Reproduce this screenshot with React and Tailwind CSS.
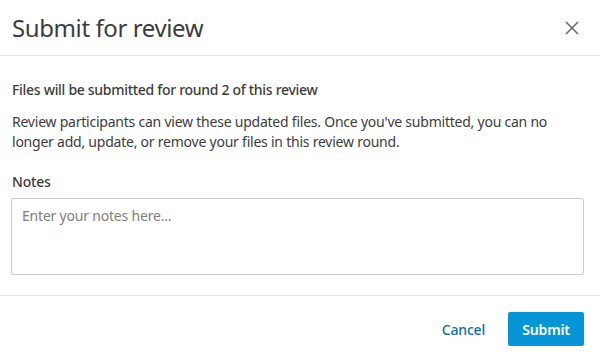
export default function App() {
  return (
    <div className="w-[600px] h-[356px] bg-white text-[#3c3c3c] font-['Noto_Sans',sans-serif] flex flex-col">
      {/* Header */}
      <div className="h-[56px] flex items-center justify-between pl-3 pr-[21px] border-b border-[#e6e6e6]">
        <h1 className="text-[24px] leading-none tracking-[-0.4px] text-[#3c3c3c]">Submit for review</h1>
        <button className="w-[14px] h-[14px] flex items-center justify-center text-[#666]">
          <svg width="14" height="14" viewBox="0 0 14 14" fill="none" stroke="currentColor" strokeWidth="1.5">
            <path d="M1 1L13 13M13 1L1 13" />
          </svg>
        </button>
      </div>

      {/* Body */}
      <div className="pl-[11px] pr-4 pt-6 pb-5 border-b border-[#e6e6e6]">
        <p className="text-[14px] leading-5 font-medium tracking-[-0.3px] pl-px">Files will be submitted for round 2 of this review</p>
        <p className="mt-3 text-[14px] leading-5 tracking-[-0.23px] pl-px text-[#3c3c3c]">
          Review participants can view these updated files. Once you've submitted, you can no longer add, update, or remove your files in this review round.
        </p>
        <p className="mt-5 text-[14px] leading-5 font-medium tracking-[-0.2px] pl-px">Notes</p>
        <textarea
          className="mt-[6px] block w-full h-[77px] resize-none border border-[#cccccc] rounded-[2px] px-[10px] py-[7px] text-[14px] leading-5 tracking-[-0.2px] placeholder:text-[#808080] outline-none"
          placeholder="Enter your notes here..."
        />
      </div>

      {/* Footer */}
      <div className="flex items-center justify-end gap-[23px] pt-4 pr-4">
        <button className="text-[14px] font-medium tracking-[-0.2px] text-[#0a6fa8]">Cancel</button>
        <button className="w-[76px] h-[34px] rounded-[2px] bg-[#0696d7] text-white text-[14px] font-semibold tracking-[-0.2px]">Submit</button>
      </div>
    </div>
  );
}
